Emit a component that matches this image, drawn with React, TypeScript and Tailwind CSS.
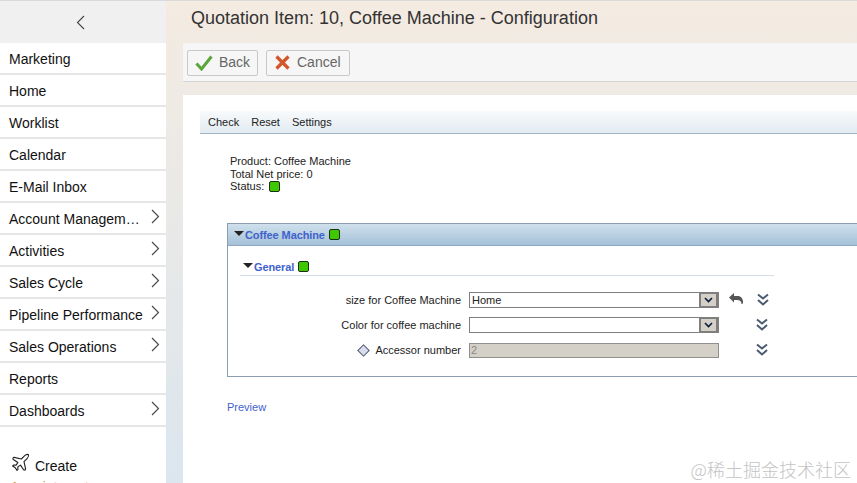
import { Plane } from "lucide-react";

const arial = "font-['Liberation_Sans',Arial,sans-serif]";

const menu = [
  { label: "Marketing" },
  { label: "Home" },
  { label: "Worklist" },
  { label: "Calendar" },
  { label: "E-Mail Inbox" },
  { label: "Account Managem…", more: true },
  { label: "Activities", more: true },
  { label: "Sales Cycle", more: true },
  { label: "Pipeline Performance", more: true },
  { label: "Sales Operations", more: true },
  { label: "Reports" },
  { label: "Dashboards", more: true },
];

function Led() {
  return <span className="inline-block h-[11px] w-[11px] rounded-[2px] border border-[#1c2e1c] bg-[#3fc800]" />;
}

function Caret() {
  return <span className="mb-[4px] h-0 w-0 border-x-[5px] border-t-[5px] border-x-transparent border-t-[#222]" />;
}

function DropArrow() {
  return (
    <span className="flex h-[16px] w-[19px] items-center justify-center border-2 border-[#7f7f7f] bg-[#d4d0c8]">
      <svg width="9" height="6" viewBox="0 0 9 6" fill="none">
        <path d="M1 1l3.5 3.5L8 1" stroke="#0a1a3a" strokeWidth="1.6" />
      </svg>
    </span>
  );
}

function Expand({ className }: { className: string }) {
  return (
    <svg width="12" height="13" viewBox="0 0 12 13" fill="none" className={className}>
      <path d="M1 1.5l5 4 5-4M1 7l5 4.5L11 7" stroke="#4a5a70" strokeWidth="2" />
    </svg>
  );
}

export default function App() {
  return (
    <div className={`relative flex h-[483px] w-[857px] overflow-hidden border-t border-[#d9d9d9] bg-white ${arial}`}>
      <aside className="h-full w-[166px] shrink-0">
        <div className="flex h-[42px] items-center justify-center bg-[#f0f0f0] pr-[6px]">
          <svg width="9" height="15" viewBox="0 0 9 15" fill="none">
            <path d="M8 1L1.5 7.5 8 14" stroke="#444" strokeWidth="1.1" />
          </svg>
        </div>
        {menu.map((m) => (
          <div key={m.label} className="flex h-[32px] items-center justify-between border-b-2 border-[#e6e6e6] pl-[9px] pr-[6px] pt-[2px] text-[14px] text-[#111]">
            <span className="whitespace-nowrap">{m.label}</span>
            {m.more && (
              <svg width="9" height="15" viewBox="0 0 9 15" fill="none" className="mb-[5px] shrink-0">
                <path d="M1 1l6.5 6.5L1 14" stroke="#444" strokeWidth="1.1" />
              </svg>
            )}
          </div>
        ))}
        <div className="mt-[25px] flex items-end gap-[4px] pl-[10px] text-[14px] text-[#111]">
          <Plane size={21} strokeWidth={1.3} className="text-[#222]" />
          <span className="leading-[14px]">Create</span>
        </div>
        <div className="mt-[6px] pl-[10px] text-[14px] leading-[16px] text-[#d79a2b]">Appointment</div>
      </aside>

      <main className="flex h-full min-w-0 flex-1 flex-col bg-gradient-to-b from-[#f4ebe1] to-[#dbe6ee]">
        <h1 className="h-[42px] pl-[25px] pt-[6px] text-[18px] leading-[22px] text-[#333]">Quotation Item: 10, Coffee Machine - Configuration</h1>
        <div className="ml-[17px] flex h-[39px] items-center gap-[8px] border-b border-[#d5d5d5] bg-[#f6f6f6] pl-[4px] pt-[1px]">
          <button className="flex h-[26px] w-[71px] items-center gap-[6px] rounded-[2px] border border-[#c8c8c8] pl-[7px] text-[14px] text-[#666]">
            <svg width="18" height="16" viewBox="0 0 18 16" fill="none">
              <path d="M1.5 8.5l5 5.5L16.5 1.5" stroke="#5aa63a" strokeWidth="3" />
            </svg>
            Back
          </button>
          <button className="flex h-[26px] w-[84px] items-center gap-[7px] rounded-[2px] border border-[#c8c8c8] pl-[8px] text-[14px] text-[#666]">
            <svg width="15" height="15" viewBox="0 0 15 15" fill="none">
              <path d="M1.5 1.5l12 12M13.5 1.5l-12 12" stroke="#d4552a" strokeWidth="3.2" />
            </svg>
            Cancel
          </button>
        </div>

        <section className="ml-[17px] mt-[13px] flex-1 bg-white pl-[17px] pt-[16px]">
          <div className="flex h-[23px] items-center gap-[12px] border-b border-[#a5b3c6] bg-gradient-to-b from-[#f8fafb] to-[#e2ebf2] pl-[8px] text-[11px] text-[#222]">
            <span>Check</span>
            <span>Reset</span>
            <span>Settings</span>
          </div>
          <div className="ml-[30px] mt-[21px] text-[11px] leading-[12.5px] text-[#222]">
            <div>Product: Coffee Machine</div>
            <div>Total Net price: 0</div>
            <div className="flex items-center gap-[5px]">Status: <Led /></div>
          </div>

          <div className="ml-[27px] mt-[30px] h-[154px] border border-r-0 border-[#8b9cb3]">
            <div className="flex h-[22px] items-center gap-[1px] border-b border-[#8ea6c0] bg-gradient-to-b from-[#cfe0ec] to-[#a5c1d8] pl-[6px] pt-[2px] text-[11px] font-bold tracking-[-0.1px] text-[#3f63cc]">
              <Caret />
              <span className="mr-[3px]">Coffee Machine</span> <span className="mb-[2px] flex"><Led /></span>
            </div>
            <div className="ml-[12px] mt-[9px] flex h-[21px] w-[534px] items-center gap-[1px] border-b border-[#d5dde5] pl-[3px] pt-[5px] text-[11px] font-bold tracking-[-0.1px] text-[#3f63cc]">
              <Caret />
              <span className="mr-[3px]">General</span> <span className="mb-[1px] flex"><Led /></span>
            </div>
            <div className="mt-[12px]">
              <div className="flex h-[25px] items-center">
                <div className="w-[233px] text-right text-[11px] text-[#222]">size for Coffee Machine</div>
                <div className="ml-[8px] flex h-[16px] w-[250px] items-center justify-between border border-[#7f7f7f] pl-[2px] text-[11px] text-[#222]">
                  Home <DropArrow />
                </div>
                <svg width="15" height="11" viewBox="0 0 15 11" className="mb-[3px] ml-[10px]">
                  <path d="M0 4.5L5 0v3h3.5C12 3 14.5 5.5 14 10.5L12.5 11C12.5 8 10.5 7 8.5 7H5v2.5z" fill="#555" />
                </svg>
                <Expand className="mb-[2px] ml-[13px]" />
              </div>
              <div className="flex h-[25px] items-center">
                <div className="w-[233px] text-right text-[11px] text-[#222]">Color for coffee machine</div>
                <div className="ml-[8px] flex h-[16px] w-[250px] items-center justify-end border border-[#7f7f7f]">
                  <DropArrow />
                </div>
                <Expand className="mb-[2px] ml-[37px]" />
              </div>
              <div className="flex h-[25px] items-center">
                <div className="flex w-[233px] items-center justify-end gap-[7px] text-[11px] text-[#222]">
                  <span className="h-[9px] w-[9px] rotate-45 border border-[#555a70] bg-[#d8dcec]" />
                  Accessor number
                </div>
                <div className="ml-[8px] h-[15px] w-[250px] border border-[#8f8f8f] bg-[#d4d0c8] pl-[1px] text-[11px] leading-[13px] text-[#8a8a8a]">2</div>
                <Expand className="mb-[2px] ml-[37px]" />
              </div>
            </div>
          </div>
          <div className="ml-[27px] mt-[22px] text-[11px] text-[#3f63cc]">Preview</div>
        </section>
      </main>

      <div className="absolute bottom-[2px] right-[6px] font-['Noto_Sans_CJK_SC',sans-serif] text-[18px] font-light leading-[24px] text-[#c4c4c4]">@稀土掘金技术社区</div>
    </div>
  );
}
